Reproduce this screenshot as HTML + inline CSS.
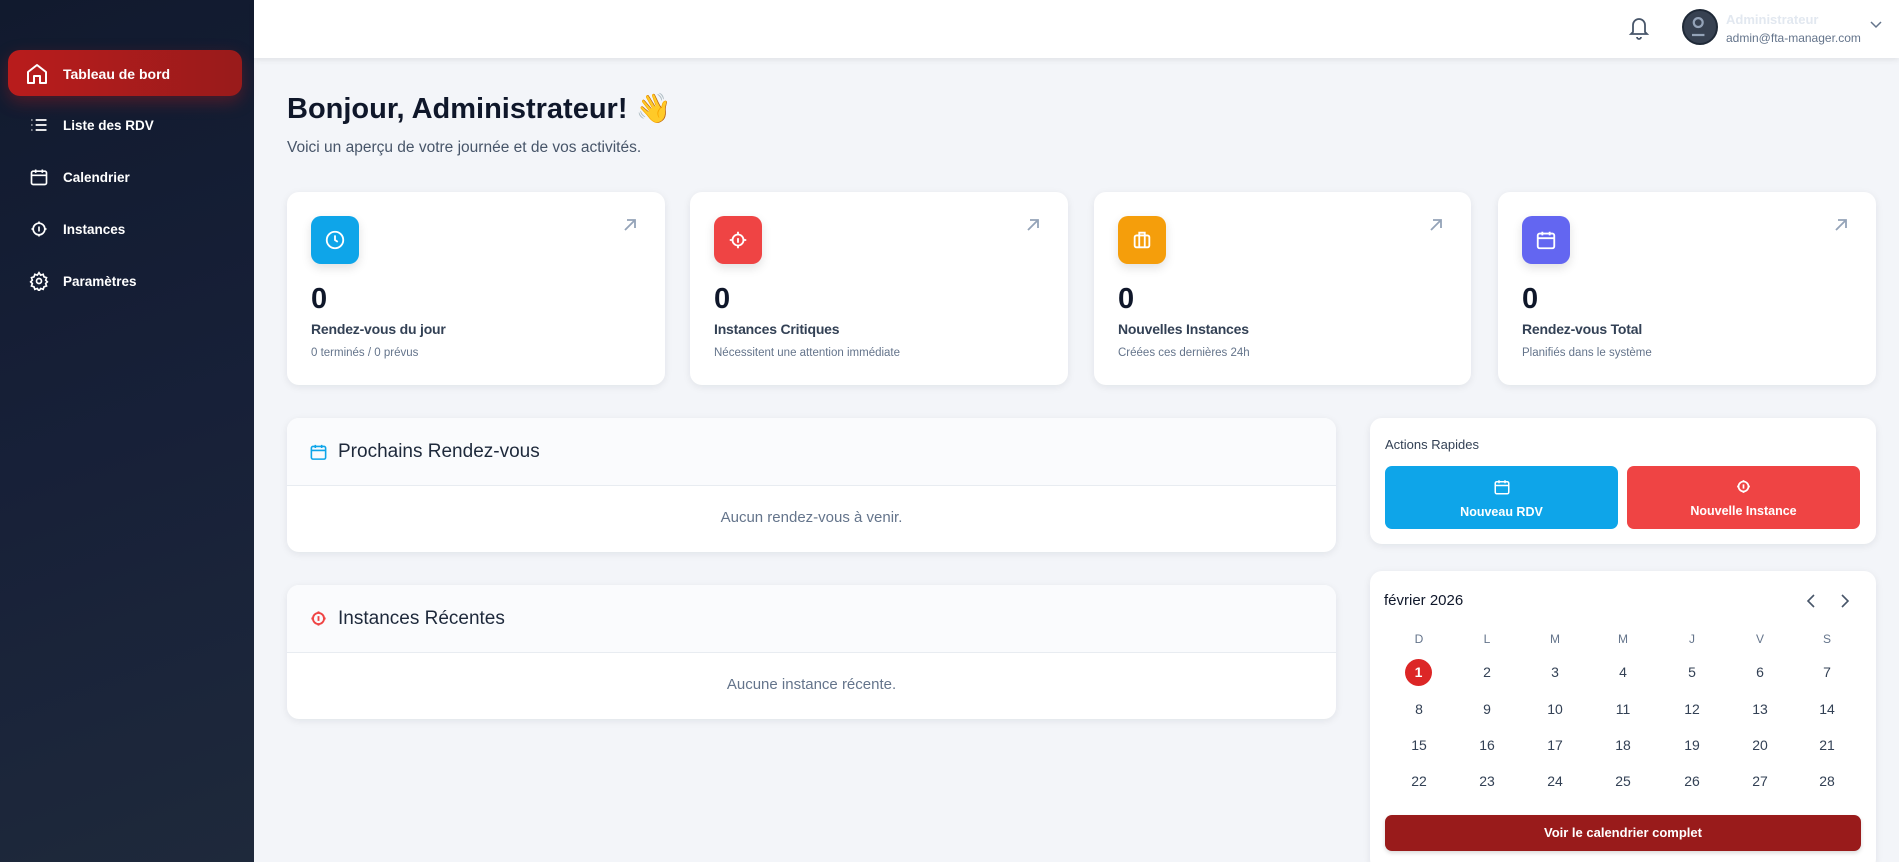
<!DOCTYPE html>
<html><head><meta charset="utf-8"><style>
*{box-sizing:border-box;margin:0;padding:0}
html{width:1899px;height:862px;overflow:hidden}
body{width:1899px;height:862px;overflow:hidden;background:#f3f5f9;font-family:"Liberation Sans",sans-serif;position:relative;color:#0f172a}
.side{position:absolute;left:0;top:0;width:254px;height:862px;background:linear-gradient(160deg,#111a2e 0%,#172038 50%,#1e293b 100%)}
.nav{position:absolute;left:29px;color:#fff;font-size:14px;font-weight:bold;display:flex;align-items:center;gap:14px}
.nav svg{width:20px;height:20px}
.active{position:absolute;left:8px;top:50px;width:234px;height:46px;border-radius:12px;background:linear-gradient(90deg,#b91c1c,#991b1b);box-shadow:0 6px 16px rgba(185,28,28,.35)}
.top{position:absolute;left:254px;top:0;right:0;height:58px;background:#fff;box-shadow:0 2px 6px rgba(0,0,0,.08)}
.card{position:absolute;background:#fff;border-radius:12px;box-shadow:0 2px 8px rgba(15,23,42,.08)}
.ib{position:absolute;left:24px;top:24px;width:48px;height:48px;border-radius:10px;display:flex;align-items:center;justify-content:center;box-shadow:0 4px 10px rgba(0,0,0,.12)}
.ib svg{width:22px;height:22px}
.arr{position:absolute;right:28px;top:26px;width:14px;height:14px}
.num{position:absolute;left:24px;top:91px;font-size:29px;font-weight:bold;color:#0f172a}
.lbl{position:absolute;left:24px;top:129px;font-size:14px;color:#334155;font-weight:bold;letter-spacing:-0.2px}
.sub{position:absolute;left:24px;top:155px;font-size:11.5px;color:#64748b}
.ph{height:68px;border-bottom:1px solid #e8ecf1;background:#fafbfd;border-radius:12px 12px 0 0;display:flex;align-items:center;padding-left:22px;gap:10px;font-size:19px;color:#1e293b}
.pe{text-align:center;font-size:15px;color:#64748b;padding-top:23px}
.cal{position:absolute;font-size:14px;color:#334155;text-align:center;width:40px}
.btn{position:absolute;top:466px;height:63px;border-radius:7px;color:#fff;font-size:12.5px;font-weight:bold;text-align:center}
</style></head><body>
<div class="side">
<div class="active"></div>
<div class="nav" style="top:62px;left:25px"><svg viewBox="0 0 24 24" fill="none" stroke="#fff" stroke-width="2" stroke-linejoin="round" style="width:24px;height:24px"><path d="M3 10l9-7 9 7v11h-6v-7h-6v7H3z"/></svg><span>Tableau de bord</span></div>
<div class="nav" style="top:115px"><svg viewBox="0 0 24 24" fill="none" stroke="#fff" stroke-width="2"><path d="M8 6h13M8 12h13M8 18h13M3 6h1M3 12h1M3 18h1"/></svg><span style="font-size:13.5px">Liste des RDV</span></div>
<div class="nav" style="top:167px"><svg viewBox="0 0 24 24" fill="none" stroke="#fff" stroke-width="2"><rect x="3" y="5" width="18" height="16" rx="2"/><path d="M3 10h18M8 3v4M16 3v4"/></svg><span style="font-size:13.5px">Calendrier</span></div>
<div class="nav" style="top:219px"><svg viewBox="0 0 24 24" fill="none" stroke="#fff" stroke-width="2"><circle cx="12" cy="12" r="7"/><path d="M12 3v2M12 19v2M3 12h2M19 12h2M12 9v6"/></svg><span style="font-size:13.5px">Instances</span></div>
<div class="nav" style="top:271px"><svg viewBox="0 0 24 24" fill="none" stroke="#fff" stroke-width="2"><circle cx="12" cy="12" r="3"/><path d="M12 2l2 3 3-1 1 3 3 1-1 3 2 2-2 2 1 3-3 1-1 3-3-1-2 3-2-3-3 1-1-3-3-1 1-3-2-2 2-2-1-3 3-1 1-3 3 1z"/></svg><span style="font-size:13.5px">Paramètres</span></div>
</div>
<div class="top">
<svg style="position:absolute;left:1373px;top:14px" width="24" height="26" viewBox="0 0 24 26" fill="none" stroke="#475569" stroke-width="1.8"><path d="M6 18V11a6 6 0 0112 0v7l2 2H4z"/><path d="M10 23a2 2 0 004 0"/></svg>
<div style="position:absolute;left:1428px;top:9px;width:36px;height:36px;border-radius:50%;background:#374151;border:2px solid #1f2937"><svg viewBox="0 0 36 36" width="32" height="32" fill="none" stroke="#94a3b8" stroke-width="2.5"><circle cx="16" cy="13" r="5"/><path d="M9 27h14"/></svg></div>
<div style="position:absolute;left:1472px;top:12px;font-size:13px;font-weight:bold;color:#e2e8f0">Administrateur</div>
<div style="position:absolute;left:1472px;top:31px;font-size:12px;color:#64748b">admin@fta-manager.com</div>
<svg style="position:absolute;left:1615px;top:20px" width="14" height="10" viewBox="0 0 14 10" fill="none" stroke="#64748b" stroke-width="1.5"><path d="M2 2l5 5 5-5"/></svg>
</div>
<div style="position:absolute;left:287px;top:92px;font-size:29px;font-weight:bold;color:#0f172a">Bonjour, Administrateur! <span style="font-family:'Noto Color Emoji',sans-serif">👋</span></div>
<div style="position:absolute;left:287px;top:139px;font-size:15.5px;color:#475569">Voici un aperçu de votre journée et de vos activités.</div>

<div class="card" style="left:287px;top:192px;width:378px;height:193px"><div class="ib" style="background:#0ea5e9"><svg viewBox="0 0 24 24" fill="none" stroke="#fff" stroke-width="2"><circle cx="12" cy="12" r="9"/><path d="M12 7v5l3 2"/></svg></div><svg class="arr" viewBox="0 0 14 14" stroke="#94a3b8" stroke-width="1.8" fill="none"><path d="M2 12L12 2M4 2h8v8"/></svg><div class="num">0</div><div class="lbl">Rendez-vous du jour</div><div class="sub">0 terminés / 0 prévus</div></div>
<div class="card" style="left:690px;top:192px;width:378px;height:193px"><div class="ib" style="background:#ef4444"><svg viewBox="0 0 24 24" fill="none" stroke="#fff" stroke-width="2"><circle cx="12" cy="12" r="6"/><path d="M12 3v3M12 18v3M3 12h3M18 12h3M12 10v5"/></svg></div><svg class="arr" viewBox="0 0 14 14" stroke="#94a3b8" stroke-width="1.8" fill="none"><path d="M2 12L12 2M4 2h8v8"/></svg><div class="num">0</div><div class="lbl">Instances Critiques</div><div class="sub">Nécessitent une attention immédiate</div></div>
<div class="card" style="left:1094px;top:192px;width:377px;height:193px"><div class="ib" style="background:#f59e0b"><svg viewBox="0 0 24 24" fill="none" stroke="#fff" stroke-width="2"><rect x="4" y="7" width="16" height="13" rx="2"/><path d="M9 7V4h6v3M9 7v13M15 7v13"/></svg></div><svg class="arr" viewBox="0 0 14 14" stroke="#94a3b8" stroke-width="1.8" fill="none"><path d="M2 12L12 2M4 2h8v8"/></svg><div class="num">0</div><div class="lbl">Nouvelles Instances</div><div class="sub">Créées ces dernières 24h</div></div>
<div class="card" style="left:1498px;top:192px;width:378px;height:193px"><div class="ib" style="background:#6366f1"><svg viewBox="0 0 24 24" fill="none" stroke="#fff" stroke-width="2"><rect x="3" y="5" width="18" height="16" rx="2"/><path d="M3 10h18M8 3v4M16 3v4"/></svg></div><svg class="arr" viewBox="0 0 14 14" stroke="#94a3b8" stroke-width="1.8" fill="none"><path d="M2 12L12 2M4 2h8v8"/></svg><div class="num">0</div><div class="lbl">Rendez-vous Total</div><div class="sub">Planifiés dans le système</div></div>

<div class="card" style="left:287px;top:418px;width:1049px;height:134px"><div class="ph"><svg width="19" height="20" viewBox="0 0 24 24" fill="none" stroke="#0ea5e9" stroke-width="2"><rect x="3" y="5" width="18" height="16" rx="2"/><path d="M3 10h18M8 3v4M16 3v4"/></svg>Prochains Rendez-vous</div><div class="pe">Aucun rendez-vous à venir.</div></div>
<div class="card" style="left:287px;top:585px;width:1049px;height:134px"><div class="ph"><svg width="19" height="19" viewBox="0 0 24 24" fill="none" stroke="#ef4444" stroke-width="2.4"><circle cx="12" cy="12" r="7"/><path d="M12 3v2M12 19v2M3 12h2M19 12h2M12 9v6"/></svg>Instances Récentes</div><div class="pe">Aucune instance récente.</div></div>

<div class="card" style="left:1370px;top:418px;width:506px;height:126px"></div>
<div style="position:absolute;left:1385px;top:437px;font-size:13px;color:#334155">Actions Rapides</div>
<div class="btn" style="left:1385px;width:233px;background:#0ea5e9"><svg style="margin-top:12px" width="18" height="18" viewBox="0 0 24 24" fill="none" stroke="#fff" stroke-width="2"><rect x="3" y="5" width="18" height="16" rx="2"/><path d="M3 10h18M8 3v4M16 3v4"/></svg><div style="margin-top:6px">Nouveau RDV</div></div>
<div class="btn" style="left:1627px;width:233px;background:#ef4444"><svg style="margin-top:12px" width="17" height="17" viewBox="0 0 24 24" fill="none" stroke="#fff" stroke-width="2.4"><circle cx="12" cy="12" r="7"/><path d="M12 3v2M12 19v2M3 12h2M19 12h2M12 9v6"/></svg><div style="margin-top:6px">Nouvelle Instance</div></div>

<div class="card" style="left:1370px;top:571px;width:506px;height:300px"></div>
<div style="position:absolute;left:1384px;top:592px;font-size:15px;color:#0f172a">février 2026</div>
<svg style="position:absolute;left:1806px;top:593px" width="10" height="16" viewBox="0 0 10 16" fill="none" stroke="#475569" stroke-width="1.6"><path d="M8 2L2 8l6 6"/></svg>
<svg style="position:absolute;left:1840px;top:593px" width="10" height="16" viewBox="0 0 10 16" fill="none" stroke="#475569" stroke-width="1.6"><path d="M2 2l6 6-6 6"/></svg>
<div style="position:absolute;left:1385px;top:815px;width:476px;height:36px;border-radius:7px;background:#991b1b;color:#fff;font-size:13px;font-weight:bold;text-align:center;line-height:36px;box-shadow:0 2px 4px rgba(0,0,0,.15)">Voir le calendrier complet</div>

<div class="cal" style="left:1399px;top:632px;font-size:12px;color:#64748b">D</div>
<div class="cal" style="left:1467px;top:632px;font-size:12px;color:#64748b">L</div>
<div class="cal" style="left:1535px;top:632px;font-size:12px;color:#64748b">M</div>
<div class="cal" style="left:1603px;top:632px;font-size:12px;color:#64748b">M</div>
<div class="cal" style="left:1672px;top:632px;font-size:12px;color:#64748b">J</div>
<div class="cal" style="left:1740px;top:632px;font-size:12px;color:#64748b">V</div>
<div class="cal" style="left:1807px;top:632px;font-size:12px;color:#64748b">S</div>
<div style="position:absolute;left:1405px;top:659px;width:27px;height:27px;border-radius:50%;background:#dc2626;color:#fff;font-weight:bold;font-size:14px;text-align:center;line-height:27px">1</div>
<div class="cal" style="left:1467px;top:664px">2</div><div class="cal" style="left:1535px;top:664px">3</div><div class="cal" style="left:1603px;top:664px">4</div><div class="cal" style="left:1672px;top:664px">5</div><div class="cal" style="left:1740px;top:664px">6</div><div class="cal" style="left:1807px;top:664px">7</div>
<div class="cal" style="left:1399px;top:701px">8</div><div class="cal" style="left:1467px;top:701px">9</div><div class="cal" style="left:1535px;top:701px">10</div><div class="cal" style="left:1603px;top:701px">11</div><div class="cal" style="left:1672px;top:701px">12</div><div class="cal" style="left:1740px;top:701px">13</div><div class="cal" style="left:1807px;top:701px">14</div>
<div class="cal" style="left:1399px;top:737px">15</div><div class="cal" style="left:1467px;top:737px">16</div><div class="cal" style="left:1535px;top:737px">17</div><div class="cal" style="left:1603px;top:737px">18</div><div class="cal" style="left:1672px;top:737px">19</div><div class="cal" style="left:1740px;top:737px">20</div><div class="cal" style="left:1807px;top:737px">21</div>
<div class="cal" style="left:1399px;top:773px">22</div><div class="cal" style="left:1467px;top:773px">23</div><div class="cal" style="left:1535px;top:773px">24</div><div class="cal" style="left:1603px;top:773px">25</div><div class="cal" style="left:1672px;top:773px">26</div><div class="cal" style="left:1740px;top:773px">27</div><div class="cal" style="left:1807px;top:773px">28</div>
</body></html>
